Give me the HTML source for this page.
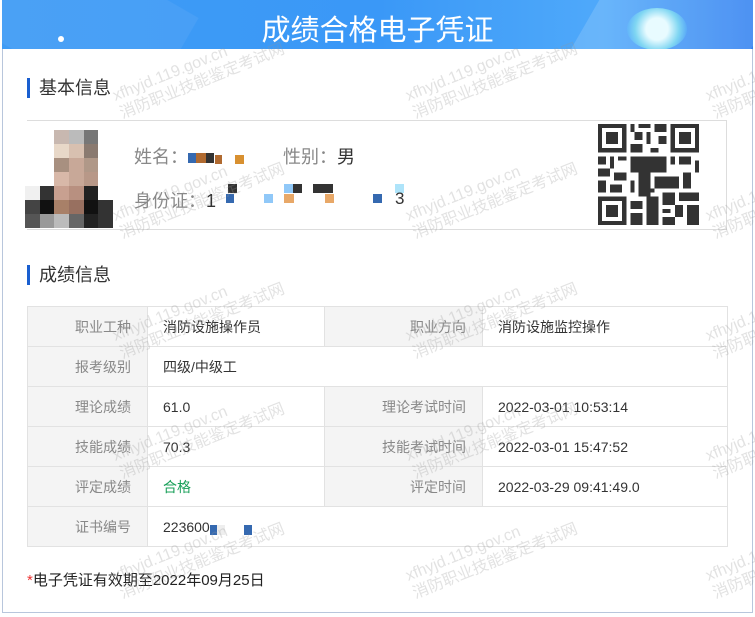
<!DOCTYPE html>
<html><head><meta charset="utf-8"><style>
*{margin:0;padding:0;box-sizing:border-box}
body{width:755px;height:617px;background:#fff;font-family:"Liberation Sans","Noto Sans CJK SC",sans-serif;position:relative;overflow:hidden;color:#333}
.frame{position:absolute;left:2px;top:0;width:751px;height:613px;border:1px solid #b8c6dc;border-top:none}
.hdr{position:absolute;left:2px;top:0;width:751px;height:49px;background:linear-gradient(90deg,#3f9cf5 0%,#3a98f7 50%,#4fa9fa 80%,#2f7ff0 100%);overflow:hidden}
.hdr h1{position:absolute;left:0;right:0;top:7px;text-align:center;color:#fff;font-size:29px;font-weight:normal;letter-spacing:0px}
.sec{position:absolute;left:27px;font-size:18px;color:#333;border-left:3px solid #1a5fd0;padding-left:9px;line-height:20px}
.info{position:absolute;left:27px;top:120px;width:700px;height:110px;border:1px solid #ddd;border-left:none}
.lbl{position:absolute;font-size:18px;color:#888}
table{position:absolute;left:27px;top:306px;border-collapse:collapse;font-size:14px}
td{border:1px solid #e2e2e2;height:40px;padding:0}
td.l{background:#f4f4f4;color:#888;text-align:right;padding-right:16px}
td.v{color:#333;padding-left:15px}
.wm{position:absolute;color:rgba(150,150,150,.28);font-size:16px;transform:rotate(-22deg);transform-origin:left top;white-space:nowrap;line-height:19px}
</style></head><body>
<div class="frame"></div>
<div class="hdr">
<div style="position:absolute;left:-20px;top:-40px;width:200px;height:120px;background:rgba(255,255,255,.06);transform:rotate(30deg)"></div>
<div style="position:absolute;left:580px;top:-10px;width:180px;height:80px;background:rgba(255,255,255,.15);transform:skewX(-30deg)"></div>
<div style="position:absolute;left:625px;top:8px;width:60px;height:42px;border-radius:50%;background:radial-gradient(circle,#e8fbff 30%,#7fd6f2 60%,rgba(100,200,250,.3) 80%)"></div>
<div style="position:absolute;left:56px;top:36px;width:6px;height:6px;border-radius:50%;background:#fff"></div>
<h1>成绩合格电子凭证</h1></div>
<div class="sec" style="top:78px">基本信息</div>
<div class="info"></div>
<div style="position:absolute;left:25px;top:130px;width:88px;height:98px;display:grid;grid-template-columns:repeat(6,1fr);grid-template-rows:repeat(7,1fr)">
<i style="background:#fff"></i><i style="background:#fff"></i><i style="background:#c8b8b0"></i><i style="background:#bbb"></i><i style="background:#777"></i><i style="background:#fff"></i>
<i style="background:#fff"></i><i style="background:#fff"></i><i style="background:#e8d8c8"></i><i style="background:#d8c0b0"></i><i style="background:#8a7a70"></i><i style="background:#fff"></i>
<i style="background:#fff"></i><i style="background:#fff"></i><i style="background:#a89080"></i><i style="background:#c8a898"></i><i style="background:#b09888"></i><i style="background:#fff"></i>
<i style="background:#fff"></i><i style="background:#fff"></i><i style="background:#d8b8a8"></i><i style="background:#c8a898"></i><i style="background:#b89888"></i><i style="background:#fff"></i>
<i style="background:#f0f0f0"></i><i style="background:#333"></i><i style="background:#c8a090"></i><i style="background:#b89080"></i><i style="background:#222"></i><i style="background:#fff"></i>
<i style="background:#444"></i><i style="background:#111"></i><i style="background:#a88068"></i><i style="background:#987060"></i><i style="background:#111"></i><i style="background:#333"></i>
<i style="background:#555"></i><i style="background:#999"></i><i style="background:#bbb"></i><i style="background:#666"></i><i style="background:#222"></i><i style="background:#333"></i>
</div>
<div class="lbl" style="left:134px;top:143px">姓名：<span style="display:inline-block;width:8px;height:10px;background:#3569b0"></span><span style="display:inline-block;width:10px;height:10px;background:#b06a30"></span><span style="display:inline-block;width:8px;height:10px;background:#333"></span></div>
<div style="position:absolute;left:215px;top:155px;width:7px;height:9px;background:#b06a30"></div>
<div style="position:absolute;left:235px;top:155px;width:9px;height:9px;background:#d89030"></div>
<div class="lbl" style="left:283px;top:143px">性别：<span style="color:#333">男</span></div>
<div class="lbl" style="left:134px;top:187px">身份证：<span style="color:#333">1</span></div>
<div style="position:absolute;left:226px;top:194px;width:8px;height:9px;background:#3569b0"></div>
<div style="position:absolute;left:228px;top:184px;width:9px;height:9px;background:#333"></div>
<div style="position:absolute;left:264px;top:194px;width:9px;height:9px;background:#90c8f8"></div>
<div style="position:absolute;left:284px;top:184px;width:9px;height:9px;background:#90c8f8"></div>
<div style="position:absolute;left:293px;top:184px;width:9px;height:9px;background:#333"></div>
<div style="position:absolute;left:284px;top:194px;width:10px;height:9px;background:#e8a868"></div>
<div style="position:absolute;left:313px;top:184px;width:20px;height:9px;background:#333"></div>
<div style="position:absolute;left:325px;top:194px;width:9px;height:9px;background:#e8a868"></div>
<div style="position:absolute;left:373px;top:194px;width:9px;height:9px;background:#3569b0"></div>
<div style="position:absolute;left:395px;top:184px;width:9px;height:9px;background:#aee4fa"></div>
<div style="position:absolute;left:395px;top:189px;font-size:17px;color:#333">3</div>
<svg style="position:absolute;left:598px;top:124px" width="101" height="101" viewBox="0 0 25 25" shape-rendering="crispEdges">
<g fill="#333">
<path d="M0 0h7v7H0zM18 0h7v7h-7zM0 18h7v7H0z"/>
</g><g fill="#fff"><path d="M1 1h5v5H1zM19 1h5v5h-5zM1 19h5v5H1z"/></g>
<g fill="#333"><path d="M2 2h3v3H2zM20 2h3v3h-3zM2 20h3v3H2z"/>
<path d="M8 0h1v2H8zM10 0h3v1h-3zM14 0h3v2h-3zM9 2h2v2H9zM12 2h1v3h-1zM15 3h2v2h-2zM8 5h3v2H8zM13 6h2v1h-2zM0 8h2v2H0zM3 8h1v3H3zM5 8h2v1H5zM8 8h9v4H8zM18 8h1v2h-1zM20 8h3v2h-3zM24 9h1v3h-1zM0 11h3v2H0zM4 12h3v2H4zM10 12h3v6h-3zM14 13h6v3h-6zM21 12h2v4h-2zM0 14h2v3H0zM3 15h3v2H3zM8 14h1v3H8zM16 17h3v3h-3zM20 17h5v2h-5zM8 19h3v2H8zM12 18h3v7h-3zM16 21h2v1h-2zM19 20h2v3h-2zM22 20h3v5h-3zM16 23h3v2h-3zM8 22h3v3H8zM13 16h1v1h-1z"/></g>
</svg>
<div class="sec" style="top:265px">成绩信息</div>
<table>
<tr><td class="l" style="width:120px">职业工种</td><td class="v" style="width:177px">消防设施操作员</td><td class="l" style="width:158px">职业方向</td><td class="v" style="width:245px">消防设施监控操作</td></tr>
<tr><td class="l">报考级别</td><td class="v" colspan="3">四级/中级工</td></tr>
<tr><td class="l">理论成绩</td><td class="v">61.0</td><td class="l">理论考试时间</td><td class="v">2022-03-01 10:53:14</td></tr>
<tr><td class="l">技能成绩</td><td class="v">70.3</td><td class="l">技能考试时间</td><td class="v">2022-03-01 15:47:52</td></tr>
<tr><td class="l">评定成绩</td><td class="v" style="color:#1aa05a">合格</td><td class="l">评定时间</td><td class="v">2022-03-29 09:41:49.0</td></tr>
<tr><td class="l">证书编号</td><td class="v" colspan="3">223600<span style="display:inline-block;width:7px;height:10px;background:#3569b0;vertical-align:-3px"></span><span style="display:inline-block;width:8px;height:10px;background:#eee;vertical-align:-3px"></span><span style="display:inline-block;width:19px"></span><span style="display:inline-block;width:8px;height:10px;background:#3569b0;vertical-align:-3px"></span></td></tr>
</table>
<div style="position:absolute;left:27px;top:569px;font-size:15px;color:#222"><span style="color:#e33">*</span>电子凭证有效期至2022年09月25日</div>
<div class="wm" style="left:110px;top:88px">xfhyjd.119.gov.cn<br>消防职业技能鉴定考试网</div>
<div class="wm" style="left:403px;top:88px">xfhyjd.119.gov.cn<br>消防职业技能鉴定考试网</div>
<div class="wm" style="left:703px;top:88px">xfhyjd.119.gov.cn<br>消防职业技能鉴定考试网</div>
<div class="wm" style="left:110px;top:208px">xfhyjd.119.gov.cn<br>消防职业技能鉴定考试网</div>
<div class="wm" style="left:403px;top:208px">xfhyjd.119.gov.cn<br>消防职业技能鉴定考试网</div>
<div class="wm" style="left:703px;top:208px">xfhyjd.119.gov.cn<br>消防职业技能鉴定考试网</div>
<div class="wm" style="left:110px;top:328px">xfhyjd.119.gov.cn<br>消防职业技能鉴定考试网</div>
<div class="wm" style="left:403px;top:328px">xfhyjd.119.gov.cn<br>消防职业技能鉴定考试网</div>
<div class="wm" style="left:703px;top:328px">xfhyjd.119.gov.cn<br>消防职业技能鉴定考试网</div>
<div class="wm" style="left:110px;top:448px">xfhyjd.119.gov.cn<br>消防职业技能鉴定考试网</div>
<div class="wm" style="left:403px;top:448px">xfhyjd.119.gov.cn<br>消防职业技能鉴定考试网</div>
<div class="wm" style="left:703px;top:448px">xfhyjd.119.gov.cn<br>消防职业技能鉴定考试网</div>
<div class="wm" style="left:110px;top:568px">xfhyjd.119.gov.cn<br>消防职业技能鉴定考试网</div>
<div class="wm" style="left:403px;top:568px">xfhyjd.119.gov.cn<br>消防职业技能鉴定考试网</div>
<div class="wm" style="left:703px;top:568px">xfhyjd.119.gov.cn<br>消防职业技能鉴定考试网</div>
</body></html>
